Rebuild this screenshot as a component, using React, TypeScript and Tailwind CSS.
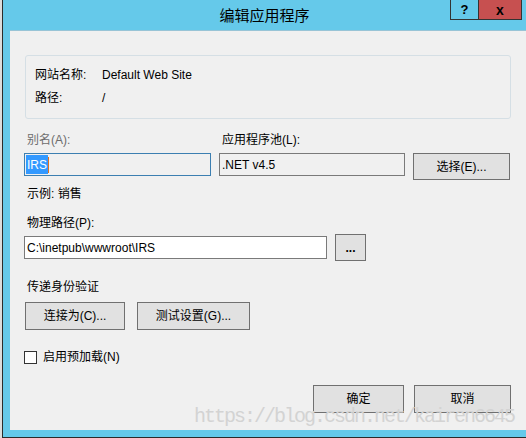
import React from 'react';

const font = "font-['Liberation_Sans','Noto_Sans_CJK_SC',sans-serif]";

function WinButton({ children, className = '' }: { children: React.ReactNode; className?: string }) {
  return (
    <div
      className={`flex items-center justify-center bg-[#e1e1e1] border border-[#707070] text-[12px] text-black ${className}`}
    >
      {children}
    </div>
  );
}

export default function App() {
  return (
    <div className={`w-[526px] h-[438px] flex bg-[#e6e6e6] relative overflow-hidden ${font}`}>
      {/* desktop strip behind the dialog */}
      <div className="w-[2px] bg-[#dcdcdc]" />

      {/* dialog window */}
      <div className="flex-1 flex flex-col bg-[#65c9ea] border-l border-b border-[#2b2b2b]">
        {/* title bar */}
        <div className="h-[30px] relative flex items-center justify-center">
          <span className="text-[15px] text-black leading-none pt-[1px]">编辑应用程序</span>
          <div className="absolute top-0 right-[4px] flex h-[20px]">
            <div className="w-[29px] h-full flex items-center justify-center border border-t-0 border-[#333] text-[13px] font-bold text-black">
              ?
            </div>
            <div className="w-[43px] h-full flex items-center justify-center bg-[#c75050] border-b border-r border-[#333] text-[14px] font-bold text-black leading-none">
              x
            </div>
          </div>
        </div>

        {/* client area */}
        <div className="flex-1 ml-[7px] bg-[#f0f0f0] border-t border-[#98c4d6] flex flex-col pl-[14px] pr-[15px] text-[12px] text-black">
          {/* site info group */}
          <div className="mt-[24px] ml-[1px] h-[64px] border border-[#d5dfe5] rounded-[3px] flex flex-col pl-[9px] pt-[11px] gap-[7px]">
            <div className="flex h-[16px] items-center">
              <span className="w-[67px]">网站名称:</span>
              <span>Default Web Site</span>
            </div>
            <div className="flex h-[16px] items-center">
              <span className="w-[67px]">路径:</span>
              <span>/</span>
            </div>
          </div>

          {/* alias / app pool labels */}
          <div className="mt-[13px] h-[16px] flex items-center">
            <span className="w-[195px] pl-[3px] text-[#6d6d6d]">别名(A):</span>
            <span className="pl-[3px]">应用程序池(L):</span>
          </div>

          <div className="mt-[5px] flex items-start gap-[8px]">
            <div className="w-[187px] h-[23px] border border-[#3c7fb1] bg-[#f0f0f0] flex items-center pl-[1px]">
              <span className="bg-[#3399ff] text-white h-[19px] flex items-center px-[1px]">IRS</span>
              <span className="w-[1px] h-[16px] bg-[#e07020]" />
            </div>
            <div className="w-[186px] h-[23px] border border-[#7a7a7a] bg-[#f0f0f0] flex items-center pl-[2px]">
              .NET v4.5
            </div>
            <WinButton className="w-[97px] h-[27px]">选择(E)...</WinButton>
          </div>

          <div className="mt-[6px] h-[16px] flex items-center pl-[3px]">示例: 销售</div>

          <div className="mt-[13px] h-[16px] flex items-center pl-[3px]">物理路径(P):</div>

          <div className="mt-[3px] flex items-center gap-[8px]">
            <div className="w-[303px] h-[23px] border border-[#7a7a7a] bg-white flex items-center pl-[2px]">
              C:\inetpub\wwwroot\IRS
            </div>
            <WinButton className="w-[31px] h-[27px] font-bold">...</WinButton>
          </div>

          <div className="mt-[18px] h-[16px] flex items-center pl-[3px]">传递身份验证</div>

          <div className="mt-[7px] ml-[1px] flex gap-[12px]">
            <WinButton className="w-[100px] h-[28px]">连接为(C)...</WinButton>
            <WinButton className="w-[113px] h-[28px]">测试设置(G)...</WinButton>
          </div>

          <div className="mt-[19px] h-[16px] flex items-center">
            <div className="w-[13px] h-[13px] border border-[#333] bg-white" />
            <span className="ml-[6px]">启用预加载(N)</span>
          </div>

          <div className="mt-[20px] flex justify-end gap-[10px]">
            <WinButton className="w-[91px] h-[28px] border-[#3c7fb1]">确定</WinButton>
            <WinButton className="w-[97px] h-[28px]">取消</WinButton>
          </div>
        </div>

        <div className="h-[7px]" />
      </div>

      {/* blog watermark */}
      <div className="absolute left-[194px] top-[405px] font-['Liberation_Mono',monospace] text-[20px] tracking-[-2px] text-[#d3d3d3] leading-[24px] pointer-events-none">
        https://blog.csdn.net/kairen6645
      </div>
    </div>
  );
}
